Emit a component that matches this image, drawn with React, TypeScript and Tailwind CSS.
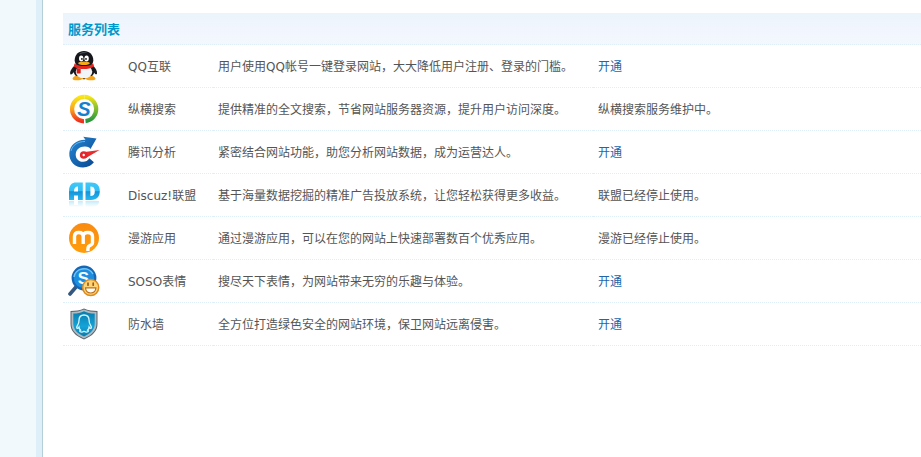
import React from "react";

type Service = {
  name: string;
  description: string;
  icon: React.ReactNode;
  status?: string;
};

const iconProps = {
  viewBox: "0 0 32 32",
  className: "block h-8 w-8",
  "aria-hidden": true,
};

function PenguinIcon() {
  return (
    <svg {...iconProps}>
      <path d="M7 15C4 18 1.500 21.500 2.300 24c.7 1.400 2.300-.3 3.500-1.800l20 0c1 1.500 2.600 3 3.200 1.500.6-2.500-1.500-5.700-4-8.200z" fill="#1b1d22" />
      <ellipse cx="16" cy="20.500" rx="10.500" ry="8.800" fill="#15171c" />
      <path d="M4.500 28.700c.4-2.400 3-3.200 5.700-3L15.500 28c-.6 2.400-10.500 3.500-11 .7zM27.500 28.700c-.4-2.400-3-3.200-5.700-3L16.500 28c.6 2.400 10.500 3.500 11 .7z" fill="#f5a21b" />
      <ellipse cx="16" cy="21.800" rx="8.300" ry="6.500" fill="#f2f5f8" />
      <path d="M16 1c-5.500 0-9.300 3.700-9.300 9.300 0 4.500 3.500 7.200 9.300 7.200s9.300-2.700 9.300-7.200C25.300 4.700 21.500 1 16 1z" fill="#15171c" />
      <path d="M11 4c2-2 6-2.500 9-.8-3-.3-6 0-9 .8z" fill="#5b616d" />
      <ellipse cx="13.200" cy="8.600" rx="2.200" ry="3" fill="#fff" />
      <ellipse cx="18.600" cy="8.600" rx="2.200" ry="3" fill="#fff" />
      <circle cx="13.900" cy="8.900" r=".9" fill="#111" />
      <circle cx="18" cy="8.900" r=".9" fill="#111" />
      <ellipse cx="16" cy="13.200" rx="5.800" ry="1.800" fill="#f8a916" />
      <path d="M6.500 13.500c3 2 6 2.600 9.500 2.600s6.500-.6 9.300-2.600l.7 3c-3 2-6.500 2.600-10 2.600s-7.500-.8-10.200-2.600z" fill="#e5261f" />
      <path d="M8.700 18l4 .8v4.400c-1.500.5-2.900.4-4 0z" fill="#d81d18" />
    </svg>
  );
}

function SearchIcon() {
  return (
    <svg {...iconProps}>
      <defs>
        <linearGradient id="ring-left" x1="0" y1="0" x2="0" y2="1">
          <stop offset="0" stopColor="#f9e516" />
          <stop offset=".5" stopColor="#fba51c" />
          <stop offset="1" stopColor="#ee3020" />
        </linearGradient>
        <linearGradient id="ring-right" x1="0" y1="0" x2="0" y2="1">
          <stop offset="0" stopColor="#f6e414" />
          <stop offset=".3" stopColor="#a6cc29" />
          <stop offset="1" stopColor="#25973e" />
        </linearGradient>
      </defs>
      <circle cx="16.500" cy="16" r="12" fill="#fff" />
      <path d="M16.500 3.900A12.200 12.200 0 0 0 16 28.300" fill="none" stroke="url(#ring-left)" strokeWidth="4.200" />
      <path d="M16.500 3.900A12.200 12.200 0 0 1 17.500 28.200" fill="none" stroke="url(#ring-right)" strokeWidth="4.200" />
      <text x="16" y="23" textAnchor="middle" fontSize="20" className="font-['Liberation_Sans'] font-bold italic" fill="#1780cb">S</text>
    </svg>
  );
}

function AnalysisIcon() {
  return (
    <svg {...iconProps}>
      <defs>
        <linearGradient id="gauge" x1="0" y1="0" x2="1" y2="1">
          <stop offset="0" stopColor="#2889d5" />
          <stop offset="1" stopColor="#06458e" />
        </linearGradient>
      </defs>
      <path d="M28.500 2.500L15.200 .8l2.300 3C8.500 3.500 2 9 1.300 17 .8 25.500 7 31.500 15 31.500c4.700 0 8.700-2.200 10.900-5.200l-4.500-4c-1.600 2.600-4 3.600-6.600 3.500-4.300-.2-7.300-3.300-7.100-7.600.3-4.800 4.100-8 9.300-7.800 1.500 0 3 .4 4.200 1L22.500 13z" fill="url(#gauge)" />
      <path d="M3 15C4.500 9 10 5.500 17 5.500" fill="none" stroke="#61b4eb" strokeWidth="1" />
      <path d="M31.500 14l-14 8.200-2.500-6z" fill="#e82b2c" />
      <circle cx="15.700" cy="19" r="2.500" fill="#fff" stroke="#e3262b" strokeWidth="2.600" />
    </svg>
  );
}

function AdIcon() {
  return (
    <svg {...iconProps}>
      <defs>
        <linearGradient id="ad-fill" gradientUnits="userSpaceOnUse" x1="0" y1="3" x2="0" y2="21">
          <stop offset="0" stopColor="#41caf8" />
          <stop offset=".52" stopColor="#30bdf4" />
          <stop offset=".53" stopColor="#1592d8" />
          <stop offset="1" stopColor="#26b9ef" />
        </linearGradient>
        <linearGradient id="ad-shade" x1="0" y1="0" x2="0" y2="1">
          <stop offset="0" stopColor="#39bdf0" stopOpacity=".3" />
          <stop offset="1" stopColor="#39bdf0" stopOpacity="0" />
        </linearGradient>
      </defs>
      <path d="M1 21V12C1 6 4 3.500 8 3.500h6.800V21H10v-4.500H6V21zM6 12.500h4v-5C7.500 7.500 6 9 6 12.500z" fill="url(#ad-fill)" fillRule="evenodd" />
      <path d="M17.500 3.500H23c6 0 8.800 3 8.800 8.500S29 21 23 21h-5.500zM22.400 7.500V17c3 0 4.400-1.500 4.400-4.800s-1.400-4.700-4.400-4.700z" fill="url(#ad-fill)" fillRule="evenodd" />
      <path d="M1 22h5v4h4v-4h4.800v6H1zM17.500 22H31c0 4-3 6-8 6h-5.500z" fill="url(#ad-shade)" />
    </svg>
  );
}

function RoamIcon() {
  return (
    <svg {...iconProps}>
      <defs>
        <linearGradient id="roam" x1="0" y1="0" x2="0" y2="1">
          <stop offset="0" stopColor="#f98b12" />
          <stop offset="1" stopColor="#ff9d0b" />
        </linearGradient>
      </defs>
      <circle cx="16" cy="16" r="15" fill="url(#roam)" />
      <path d="M6.500 22V14.500c0-2.800 1.500-4 4.200-4 3 0 4.500 1.300 4.500 4V22M15.200 14.500c0-2.700 1.700-4 4.500-4 3 0 4.800 1.300 4.800 4V21c0 2.500-2.500 1.500-4 3.500-.8 1.200-.6 2.500-.6 4.500" fill="none" stroke="#fff" strokeWidth="3.400" />
    </svg>
  );
}

function EmojiIcon() {
  return (
    <svg {...iconProps}>
      <path d="M8 22l-6 7" stroke="#34587f" strokeWidth="3.600" strokeLinecap="round" />
      <circle cx="16" cy="13" r="11.300" fill="#1c8ee0" stroke="#1766b4" strokeWidth="2.200" />
      <path d="M6 12a10 9 0 0 1 19-3" fill="none" stroke="#71c2f2" strokeWidth="1.500" />
      <text x="15.500" y="19" textAnchor="middle" fontSize="17" className="font-['Liberation_Sans'] font-bold" fill="#f4faff">S</text>
      <circle cx="22.700" cy="22.500" r="8" fill="#ffd477" stroke="#dc8a20" strokeWidth="1.500" />
      <path d="M17.500 22.800h10.400c-.2 3.500-2.200 5.200-5.200 5.200s-5-1.700-5.200-5.200z" fill="#fff" stroke="#bd701b" strokeWidth="1.200" />
      <path d="M20 18v2.200M25.200 18v2.200" stroke="#a25b16" strokeWidth="1.700" strokeLinecap="round" />
    </svg>
  );
}

function ShieldIcon() {
  return (
    <svg {...iconProps}>
      <defs>
        <linearGradient id="shield" x1="0" y1="0" x2="0" y2="1">
          <stop offset="0" stopColor="#087cad" />
          <stop offset=".6" stopColor="#15a4d8" />
          <stop offset="1" stopColor="#087bab" />
        </linearGradient>
      </defs>
      <path d="M16 .5C12 2.300 7.500 3 2.500 3v13c0 7 5 12 13.500 15.500C24.500 28 29.500 23 29.500 16V3C25 3 20 2.300 16 .5z" fill="#59656e" />
      <path d="M16 1.500C12 3.200 8 4 3.500 4v12c0 6.500 4.500 11 12.500 14.400C24 27 28.500 22.500 28.500 16V4C24.500 4 20 3.200 16 1.500z" fill="#aebbc2" />
      <path d="M16 3.200C13 4.700 9.500 5.500 5.300 5.600V16c0 5.500 4.200 9.500 10.700 12.500 6.500-3 10.700-7 10.700-12.500V5.600C22.500 5.500 19 4.700 16 3.200z" fill="url(#shield)" />
      <path d="M16 7c-3.400 0-5 2.300-5 5.500 0 2-.3 3.200-1.500 4.800-1 1.500-1 3-.3 3.100.8 0 1.500-.8 1.800-1.300.2 1.500.7 2.300 1.500 3-.8.500-1 1.200-.4 1.600 1 .5 2.800.3 3.900-.4 1.200.7 3 .9 4 .4.600-.4.400-1.100-.4-1.600.8-.7 1.300-1.500 1.500-3 .3.500 1 1.300 1.800 1.300.7-.1.700-1.600-.3-3.100-1.200-1.600-1.500-2.800-1.500-4.800C21.100 9.300 19.400 7 16 7z" fill="none" stroke="#d9f6ff" strokeWidth="1.300" />
    </svg>
  );
}

const services: Service[] = [
  {
    name: "QQ互联",
    description: "用户使用QQ帐号一键登录网站，大大降低用户注册、登录的门槛。",
    icon: <PenguinIcon />,
  },
  {
    name: "纵横搜索",
    description: "提供精准的全文搜索，节省网站服务器资源，提升用户访问深度。",
    icon: <SearchIcon />,
    status: "纵横搜索服务维护中。",
  },
  {
    name: "腾讯分析",
    description: "紧密结合网站功能，助您分析网站数据，成为运营达人。",
    icon: <AnalysisIcon />,
  },
  {
    name: "Discuz!联盟",
    description: "基于海量数据挖掘的精准广告投放系统，让您轻松获得更多收益。",
    icon: <AdIcon />,
    status: "联盟已经停止使用。",
  },
  {
    name: "漫游应用",
    description: "通过漫游应用，可以在您的网站上快速部署数百个优秀应用。",
    icon: <RoamIcon />,
    status: "漫游已经停止使用。",
  },
  {
    name: "SOSO表情",
    description: "搜尽天下表情，为网站带来无穷的乐趣与体验。",
    icon: <EmojiIcon />,
  },
  {
    name: "防水墙",
    description: "全方位打造绿色安全的网站环境，保卫网站远离侵害。",
    icon: <ShieldIcon />,
  },
];

function ServiceRow({ service }: { service: Service }) {
  const cell = "border-b border-dotted border-[#deeffb] px-[5px]";

  return (
    <tr>
      <td className={`${cell} py-[5px]`}>{service.icon}</td>
      <td className={`${cell} pt-0.5`}>{service.name}</td>
      <td className={`${cell} pt-0.5`}>{service.description}</td>
      <td className={`${cell} pt-0.5`}>
        {service.status ?? (
          <a href="#open" className="text-[#2366a8] hover:underline">
            开通
          </a>
        )}
      </td>
    </tr>
  );
}

export default function App() {
  return (
    <div className="flex min-h-screen bg-white font-['DejaVu_Sans','Noto_Sans_CJK_SC',sans-serif] text-xs text-[#555]">
      <aside className="w-[43px] shrink-0 border-r border-[#b5cfd9] bg-[#f2f9fd]">
        <div className="ml-auto h-full w-1.5 bg-[#deeffa]" />
      </aside>
      <main className="min-w-0 flex-1 pt-[13px] pl-5">
        <table className="w-full table-fixed border-separate border-spacing-0 text-left">
          <colgroup>
            <col className="w-[60px]" />
            <col className="w-[90px]" />
            <col className="w-[380px]" />
            <col />
          </colgroup>
          <thead>
            <tr className="h-8 bg-linear-to-b from-[#ebf4fb] via-[#f1f6fe] to-[#f3f8fe]">
              <th colSpan={4} className="border-b border-dotted border-[#deeffb] px-[5px] pt-0.5 text-[13px] text-[#0099cc]">
                服务列表
              </th>
            </tr>
          </thead>
          <tbody>
            {services.map((service) => (
              <ServiceRow key={service.name} service={service} />
            ))}
          </tbody>
        </table>
      </main>
    </div>
  );
}
